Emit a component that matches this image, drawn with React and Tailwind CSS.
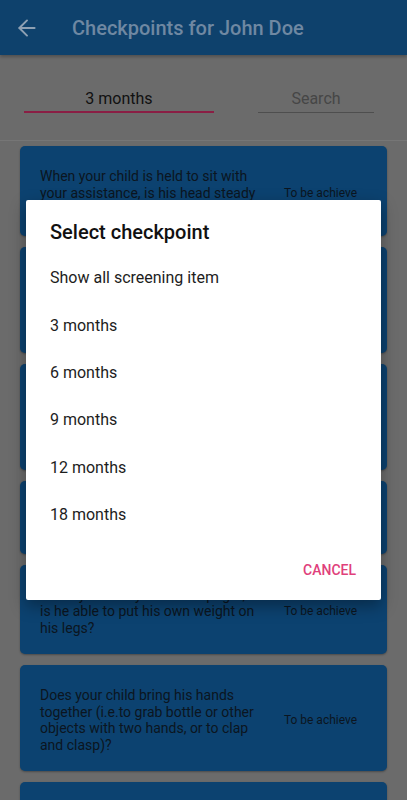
import React from "react";

const cards = [
  ["When your child is held to sit with", "your assistance, is his head steady", "and upright?"],
  ["Does your child follow with his eyes", "a moving object or face from one", "side to the other side (180", "degrees)?"],
  ["Does your child turn his head", "towards the direction of sound", "or voice when someone calls", "him from the side?"],
  ["Does your child smile back when", "you smile at him?"],
  ["When you hold your child upright,", "is he able to put his own weight on", "his legs?"],
  ["Does your child bring his hands", "together (i.e.to grab bottle or other", "objects with two hands, or to clap", "and clasp)?"],
  ["Does your child make cooing sounds", "like 'aah' or 'ooh' when you talk", "to him?"],
];

const options = ["Show all screening item", "3 months", "6 months", "9 months", "12 months", "18 months"];

export default function App() {
  return (
    <div
      className="relative w-[407px] h-[800px] overflow-hidden bg-[#6b6b6b]"
      style={{ fontFamily: "Roboto, 'Noto Sans', Arial, sans-serif" }}
    >
      {/* App bar */}
      <div className="h-[55px] bg-[#0e416c] flex items-center pl-[14px] shadow-[0_2px_3px_rgba(0,0,0,0.25)]">
        <svg width="26" height="26" viewBox="0 0 24 24" fill="none" stroke="#8ea0b3" strokeWidth="1.8" strokeLinecap="round" strokeLinejoin="round">
          <path d="M19 12H5" />
          <path d="M12 19l-7-7 7-7" />
        </svg>
        <div className="ml-[32px] text-[20px] font-medium text-[#6f88a2] leading-6">Checkpoints for John Doe</div>
      </div>

      {/* Tabs */}
      <div className="h-[86px] border-b border-[#767676] flex pt-[32px]">
        <div className="ml-[24px] w-[190px] h-[26px] border-b-2 border-[#8a1e44] text-center text-[16px] leading-6 text-[#111111]">
          3 months
        </div>
        <div className="ml-[44px] w-[116px] h-[26px] border-b border-[#4e4e4e] text-center text-[16px] leading-6 text-[#464646]">
          Search
        </div>
      </div>

      {/* Cards */}
      <div className="flex flex-col gap-[11px] px-5 pt-[5px]">
        {cards.map((lines, i) => (
          <div
            key={i}
            className="flex items-center bg-[#0c4270] rounded-[5px] shadow-[0_1px_2px_rgba(0,0,0,0.3)] pt-[22px] pb-[18px] pl-5"
          >
            <div className="w-[222px] text-[14px] leading-[16.5px] text-[#0b1520]">
              {lines.map((l, j) => (
                <div key={j} className="whitespace-nowrap">{l}</div>
              ))}
            </div>
            <div className="flex-1 text-center text-[12px] text-[#0b1520] pr-[8px]">To be achieve</div>
          </div>
        ))}
      </div>

      {/* Dialog */}
      <div className="absolute inset-0 flex items-center justify-center">
        <div className="w-[355px] h-[400px] bg-white rounded-[2px] shadow-[0_6px_16px_rgba(0,0,0,0.35)] flex flex-col">
          <div className="pt-5 px-6 text-[20px] leading-6 font-medium text-[#111111]">Select checkpoint</div>
          <div className="mt-[10.5px] flex flex-col">
            {options.map((o) => (
              <div key={o} className="h-[47.4px] flex items-center px-6 text-[16px] text-[#1d1d1d]">
                {o}
              </div>
            ))}
          </div>
          <div className="flex-1 flex items-center justify-end pr-[25px] pt-[3px]">
            <span className="text-[14px] font-medium text-[#e0407b]">CANCEL</span>
          </div>
        </div>
      </div>
    </div>
  );
}
